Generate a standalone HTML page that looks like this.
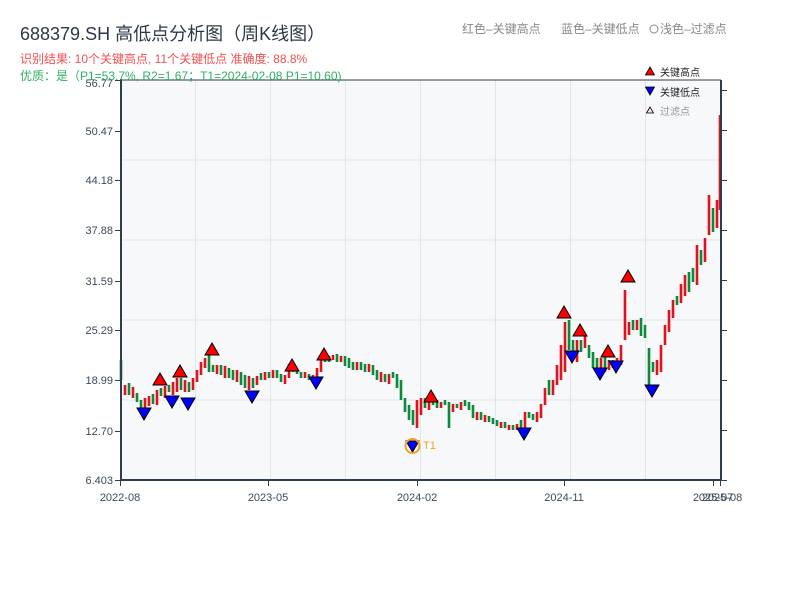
<!DOCTYPE html>
<html><head><meta charset="utf-8"><style>
body{margin:0;width:800px;height:600px;background:#fff;overflow:hidden;font-family:"Liberation Sans","Noto Sans CJK SC",sans-serif}
</style></head><body>
<svg width="800" height="600" xmlns="http://www.w3.org/2000/svg" style="position:absolute;left:0;top:0;font-family:'Liberation Sans','Noto Sans CJK SC',sans-serif">
<rect x="121" y="80" width="600" height="400" fill="#f6f8fa"/>
<g stroke="#e2e5ea" stroke-width="1">
<path d="M121 160H721M121 240H721M121 320H721M121 400H721"/>
<path d="M195.5 80V480M270.5 80V480M345.5 80V480M420.5 80V480M495.5 80V480M570.5 80V480M645.5 80V480"/>
</g>
<path fill="none" stroke="#e0121b" stroke-width="2.6" d="M125 395V385M133 398V387M145 408V398M149 406V396M157 405V390M165 398V386M173 395V382M177 392V378M185 392V380M193 390V378M197 382V370M201 375V362M205 368V358M217 374V365M225 378V366M237 382V370M249 390V376M257 385V376M265 380V372M273 378V370M285 384V375M289 378V364M305 378V372M313 382V375M317 378V368M321 372V356M333 360V355M341 362V356M357 370V362M369 372V364M381 382V372M389 384V374M417 428V400M421 415V398M429 410V400M441 408V402M453 412V404M461 410V402M477 420V412M485 422V415M501 428V422M509 430V425M517 430V424M525 428V412M537 422V412M541 418V404M545 405V388M553 395V380M557 385V365M561 380V345M565 372V322M577 362V340M585 348V335M601 372V358M609 370V360M617 368V358M621 365V345M625 340V290M629 335V322M637 330V320M657 375V360M661 372V345M665 345V325M669 332V310M673 318V300M681 303V284M685 296V275M697 285V245M705 262V238M709 235V195M717 228V200M720 210V115"/>
<path fill="none" stroke="#0a8a3a" stroke-width="2.6" d="M121 360V380M129 383V395M137 393V402M141 400V410M153 394V404M161 388V396M169 385V392M181 378V390M189 382V392M209 355V372M213 365V372M221 365V375M229 368V378M233 370V380M241 372V385M245 375V388M253 378V388M261 373V380M269 372V378M277 370V378M281 374V382M293 366V372M297 370V374M301 372V378M309 374V380M325 356V362M329 356V362M337 354V362M345 356V366M349 358V368M353 362V370M361 362V370M365 364V372M373 365V375M377 370V380M385 374V382M393 372V378M397 374V388M401 380V400M405 398V412M409 405V420M413 410V425M425 398V408M433 400V405M437 400V408M445 400V405M449 402V428M457 404V408M465 400V406M469 402V410M473 405V418M481 412V420M489 416V422M493 418V424M497 420V426M505 422V428M513 425V430M521 420V430M529 412V418M533 414V420M549 380V395M569 320V350M573 340V360M581 340V352M589 345V358M593 352V368M597 358V370M605 356V372M613 360V368M633 320V330M641 318V336M645 325V338M649 348V390M653 362V372M677 296V305M689 272V292M693 268V282M701 250V265M713 208V232"/>
<path d="M121 80H721" stroke="#2d3e50" stroke-width="1"/>
<path d="M121 79V481M121 480H721M721 80V480" stroke="#2d3e50" stroke-width="2" fill="none"/>
<g stroke="#2d3e50" stroke-width="1">
<path d="M115 80.5H121M115 131.5H121M115 180.5H121M115 230.5H121M115 281.5H121M115 330.5H121M115 380.5H121M115 431.5H121M115 480.5H121"/>
<path d="M721 90.5H727M721 130.5H727M721 180.5H727M721 230.5H727M721 280.5H727M721 330.5H727M721 380.5H727M721 430.5H727M721 480.5H727"/>
<path d="M120.5 480V486M268.5 480V486M417.5 480V486M564.5 480V486M713.5 480V486M720.5 480V486"/>
</g>
<g font-size="11" fill="#3c4a5a" text-anchor="end">
<text x="113" y="87">56.77</text><text x="113" y="135">50.47</text><text x="113" y="184">44.18</text><text x="113" y="234">37.88</text><text x="113" y="285">31.59</text><text x="113" y="334">25.29</text><text x="113" y="384">18.99</text><text x="113" y="435">12.70</text><text x="113" y="484">6.403</text>
</g>
<g font-size="11" fill="#3c4a5a" text-anchor="middle">
<text x="120" y="501">2022-08</text><text x="268" y="501">2023-05</text><text x="417" y="501">2024-02</text><text x="564" y="501">2024-11</text><text x="713" y="501">2025-07</text><text x="722" y="501">2025-08</text>
</g>
<g fill="#f00" stroke="#000" stroke-width="1">
<path d="M160 373l-7 12h14z"/><path d="M180 365l-7 12h14z"/><path d="M212 343l-7 12h14z"/><path d="M292 359l-7 12h14z"/><path d="M324 348l-7 12h14z"/><path d="M431 390l-7 12h14z"/><path d="M564 306l-7 12h14z"/><path d="M580 324l-7 12h14z"/><path d="M608 345l-7 12h14z"/><path d="M628 270l-7 12h14z"/>
</g>
<g fill="#00f" stroke="#000" stroke-width="1">
<path d="M137 408h14l-7 12z"/><path d="M165 396h14l-7 12z"/><path d="M181 398h14l-7 12z"/><path d="M245 391h14l-7 12z"/><path d="M309 377h14l-7 12z"/><path d="M406 441h13l-6.5 11z"/><path d="M565 351h14l-7 12z"/><path d="M593 368h14l-7 12z"/><path d="M609 361h14l-7 12z"/><path d="M645 385h14l-7 12z"/><path d="M517 428h14l-7 12z"/>
</g>
<circle cx="412.5" cy="446" r="7" fill="none" stroke="#f5a020" stroke-width="2"/>
<text x="423" y="449" font-size="11" fill="#f5a020">T1</text>
<path d="M650 67l-4.5 8h9z" fill="#f00" stroke="#000" stroke-width="0.8"/>
<text x="660" y="76" font-size="10" fill="#222">关键高点</text>
<path d="M645.5 87h9l-4.5 8z" fill="#00f" stroke="#000" stroke-width="0.8"/>
<text x="660" y="96" font-size="10" fill="#222">关键低点</text>
<path d="M650 107l-3.5 6h7z" fill="#fdd" stroke="#000" stroke-width="0.8"/>
<text x="660" y="115" font-size="10" fill="#999">过滤点</text>
<text x="20" y="40" font-size="18" fill="#2d3748">688379.SH 高低点分析图（周K线图）</text>
<text x="20" y="63" font-size="12" fill="#f05050">识别结果: 10个关键高点, 11个关键低点  准确度: 88.8%</text>
<text x="20" y="80" font-size="12" fill="#30b060">优质：是（P1=53.7%, R2=1.67；T1=2024-02-08 P1=10.60)</text>
<text x="462" y="33" font-size="12" fill="#888">红色–关键高点</text>
<text x="561" y="33" font-size="12" fill="#888">蓝色–关键低点</text>
<circle cx="654" cy="29" r="4" fill="none" stroke="#888" stroke-width="1"/>
<text x="660" y="33" font-size="12" fill="#888">浅色–过滤点</text>
</svg>
</body></html>
